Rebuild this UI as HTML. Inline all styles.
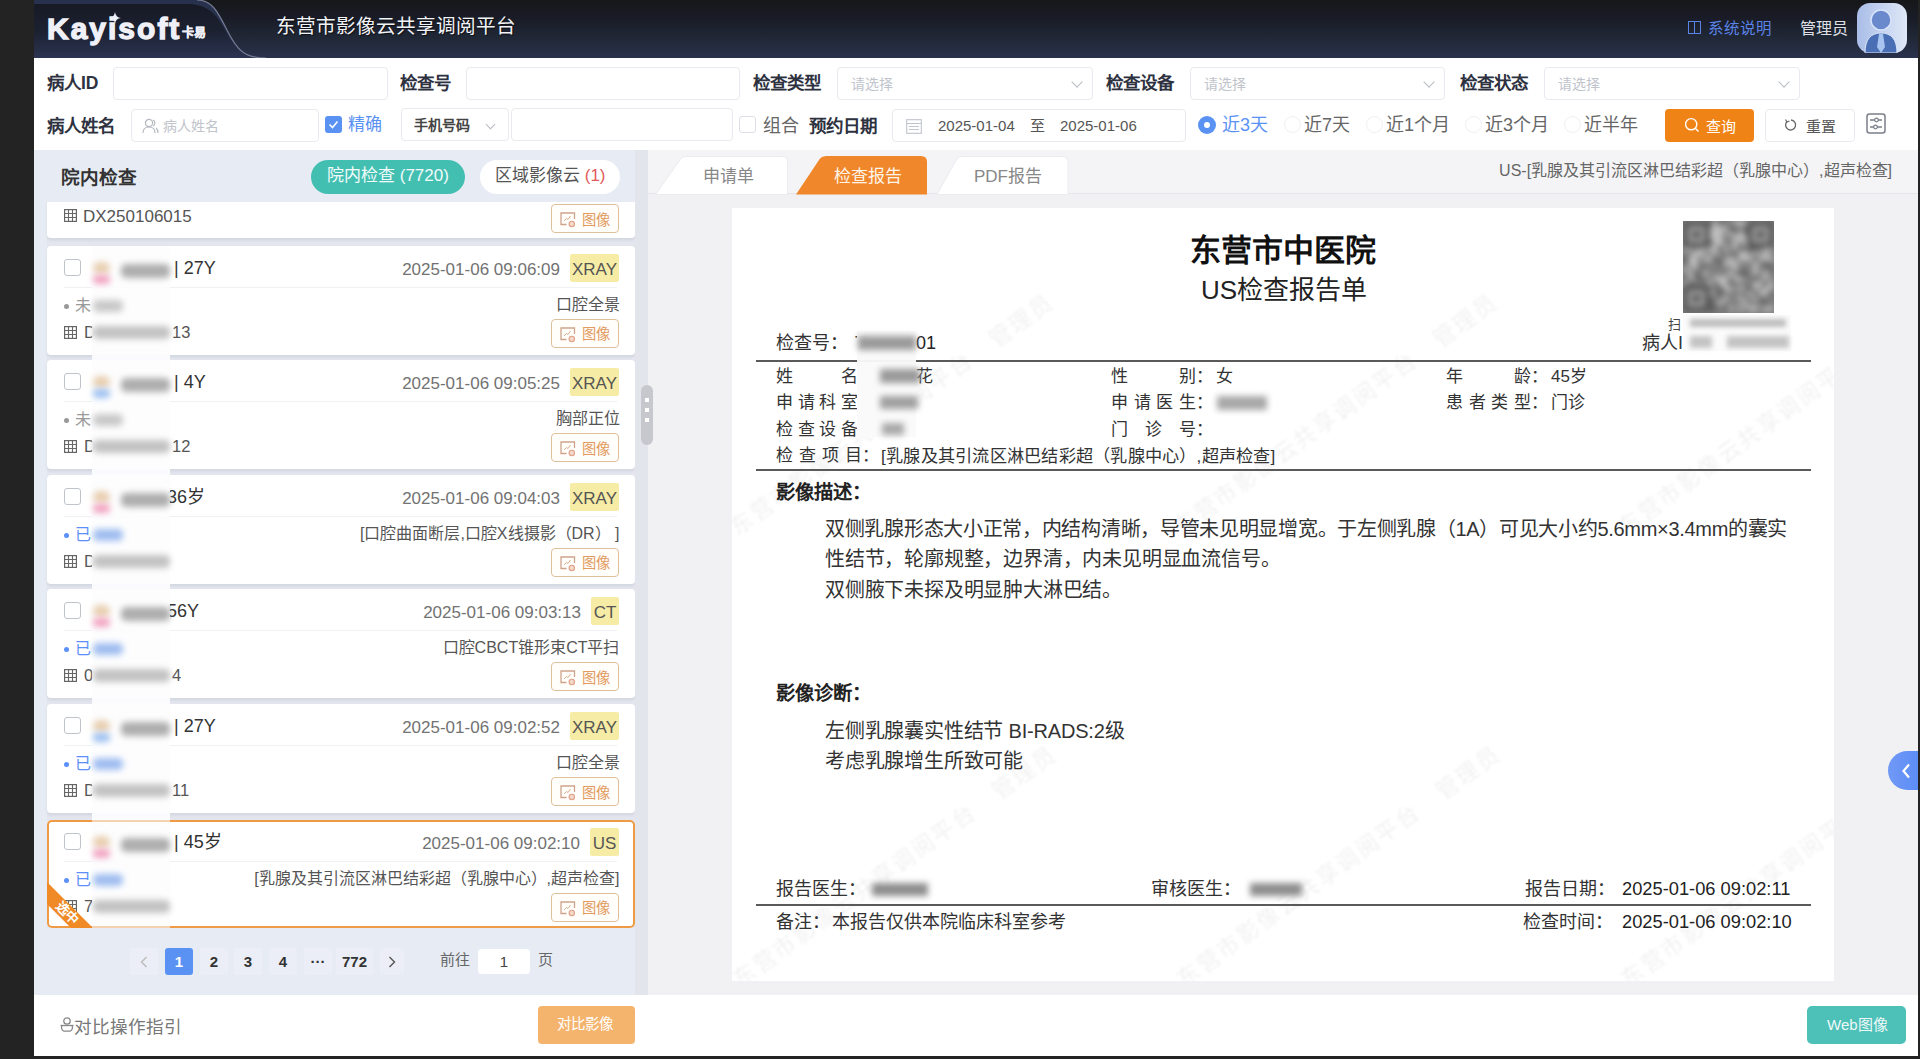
<!DOCTYPE html>
<html lang="zh-CN"><head><meta charset="utf-8">
<style>
*{box-sizing:border-box;margin:0;padding:0}
html,body{width:1920px;height:1059px;overflow:hidden;background:#232323;font-family:"Liberation Sans",sans-serif;color:#333}
.a{position:absolute;white-space:nowrap}
#hdr{position:absolute;left:34px;top:0;width:1884px;height:58px;background:linear-gradient(180deg,#161719 0%,#191c26 30%,#202736 65%,#29324c 100%);overflow:hidden}
#flt{position:absolute;left:34px;top:58px;width:1884px;height:92px;background:#fff}
.lbl{position:absolute;font-size:17.5px;font-weight:bold;color:#2e3140;white-space:nowrap;line-height:20px}
.inp{position:absolute;border:1px solid #e8eaef;border-radius:4px;background:#fff;height:33px}
.ph{position:absolute;font-size:14px;color:#c0c4cc;white-space:nowrap;line-height:16px}
.arr{position:absolute;width:8px;height:8px;border-right:1.3px solid #b8bcc4;border-bottom:1.3px solid #b8bcc4;transform:rotate(45deg)}
.rad{position:absolute;width:17px;height:17px;border-radius:50%;border:1px solid #eff0f3;background:#fff}
.rtx{position:absolute;font-size:18px;color:#666;white-space:nowrap;line-height:20px;margin-top:1.5px}
#lp{position:absolute;left:34px;top:150px;width:614px;height:845px;background:#e7ecf4;overflow:hidden}
#rp{position:absolute;left:648px;top:150px;width:1270px;height:845px;background:#f1f1f3;overflow:hidden}
#ftr{position:absolute;left:34px;top:995px;width:1884px;height:61px;background:#fff}
.card{position:absolute;left:13px;width:588px;background:#fff;border-radius:4px;box-shadow:0 2px 3px rgba(60,70,90,.10)}
.card.sel{box-shadow:inset 0 0 0 2px #ef9a45;border-radius:5px;overflow:hidden}
.ibtn{position:absolute;width:68px;height:29px;border:1.3px solid #dfc09c;border-radius:4px;background:#fffefb}
.tag{height:28px;background:#f6eca6;color:#555;font-size:17px;line-height:31px;text-align:center;border-radius:2px}
.blr{filter:blur(3px)}
.pg{top:798px;height:27px;border-radius:3px;font-size:15px;font-weight:bold;text-align:center;line-height:27px}
</style></head><body>

<!-- HEADER -->
<div id="hdr">
  <svg class="a" style="left:0;top:0" width="260" height="58" viewBox="0 0 260 58">
    <defs><linearGradient id="lg" x1="0" y1="0" x2="0" y2="1"><stop offset="0" stop-color="#171a25"/><stop offset="0.5" stop-color="#1c2131"/><stop offset="1" stop-color="#2b3451"/></linearGradient></defs>
    <path d="M0 0 L163 0 C178 0 184 12 193 30 C203 50 210 58 232 58 L0 58 Z" fill="#27304c"/><path d="M0 4 L152 4 C170 4 180 10 190 28 C201 49 208 57 226 58 L0 58 Z" fill="url(#lg)"/>
    <path d="M163 0 C178 0 184 12 193 30 C203 50 210 58 232 58" fill="none" stroke="#8a90a8" stroke-width="1.2" opacity="0.8"/>
  </svg>
  <div class="a" style="left:13px;top:12px;font-size:30px;font-weight:bold;color:#f0f1f8;letter-spacing:2px;line-height:34px;-webkit-text-stroke:1.3px #f0f1f8">Kayisoft</div>
  <svg class="a" style="left:75px;top:12px" width="12" height="12" viewBox="0 0 12 12"><path d="M6 0 Q6.6 5.4 12 6 Q6.6 6.6 6 12 Q5.4 6.6 0 6 Q5.4 5.4 6 0Z" fill="#f0f1f8"/></svg>
  <div class="a" style="left:148px;top:26px;font-size:12px;font-weight:bold;color:#f0f1f8;line-height:14px;-webkit-text-stroke:0.4px #f0f1f8">卡易</div>
  <div class="a" style="left:242px;top:15px;font-size:19.6px;color:#f2f3f7;line-height:22px;text-shadow:1px 1px 1px rgba(0,0,0,.6)">东营市影像云共享调阅平台</div>
  <div class="a" style="left:1654px;top:21px;width:13px;height:13px;border:1.3px solid #5b84e8"></div>
  <div class="a" style="left:1660px;top:21px;width:1px;height:13px;background:#5b84e8"></div>
  <div class="a" style="left:1674px;top:18.5px;font-size:15.5px;color:#5b84e8;line-height:20px">系统说明</div>
  <div class="a" style="left:1766px;top:18.5px;font-size:16px;color:#dfe0e6;line-height:20px">管理员</div>
  <svg class="a" style="left:1823px;top:3px" width="50" height="50" viewBox="0 0 50 50">
    <defs><linearGradient id="av" x1="0" y1="0" x2="1" y2="0"><stop offset="0" stop-color="#a9bde8"/><stop offset="1" stop-color="#dfe8f7"/></linearGradient></defs>
    <rect x="0" y="0" width="50" height="50" rx="13" fill="url(#av)"/>
    <circle cx="24" cy="17" r="10" fill="#6a88cc" stroke="#d8e4f8" stroke-width="1.5"/>
    <path d="M8 50 C8 36 14 30 24 30 C34 30 40 36 40 50 Z" fill="#4a6fb5" stroke="#d8e4f8" stroke-width="1"/>
    <path d="M22 31 L26 31 L28 44 L24 50 L20 44 Z" fill="#a8c4f0"/>
  </svg>
</div>

<!-- FILTER -->
<div id="flt">
  <div class="lbl" style="left:13px;top:15px">病人ID</div>
  <div class="inp" style="left:79px;top:9px;width:275px"></div>
  <div class="lbl" style="left:366px;top:15px">检查号</div>
  <div class="inp" style="left:432px;top:9px;width:274px"></div>
  <div class="lbl" style="left:719px;top:15px">检查类型</div>
  <div class="inp" style="left:803px;top:9px;width:256px"><div class="ph" style="left:13px;top:8px">请选择</div><div class="arr" style="left:235px;top:10px"></div></div>
  <div class="lbl" style="left:1072px;top:15px">检查设备</div>
  <div class="inp" style="left:1156px;top:9px;width:255px"><div class="ph" style="left:13px;top:8px">请选择</div><div class="arr" style="left:234px;top:10px"></div></div>
  <div class="lbl" style="left:1426px;top:15px">检查状态</div>
  <div class="inp" style="left:1510px;top:9px;width:256px"><div class="ph" style="left:13px;top:8px">请选择</div><div class="arr" style="left:235px;top:10px"></div></div>

  <div class="lbl" style="left:13px;top:57.5px">病人姓名</div>
  <div class="inp" style="left:97px;top:51px;width:188px">
    <svg class="a" style="left:10px;top:8px" width="17" height="16" viewBox="0 0 17 16"><circle cx="7" cy="5" r="3.6" fill="none" stroke="#b4b8c0" stroke-width="1.2"/><path d="M1 15 C1 10.5 3.5 9 7 9 C10.5 9 13 10.5 13 15" fill="none" stroke="#b4b8c0" stroke-width="1.2"/><path d="M11 2 C13.5 3 13.5 7 11 8 M14 10 C15.5 11 16 13 16 15" fill="none" stroke="#b4b8c0" stroke-width="1.2"/></svg>
    <div class="ph" style="left:31px;top:8px">病人姓名</div>
  </div>
  <div class="a" style="left:291px;top:58px;width:17px;height:17px;border-radius:3px;background:#5a92f4"></div>
  <svg class="a" style="left:291px;top:58px" width="17" height="17" viewBox="0 0 17 17"><path d="M4.5 8.5 L7.5 11.5 L12.5 5.5" fill="none" stroke="#fff" stroke-width="1.6"/></svg>
  <div class="a" style="left:314px;top:57px;font-size:17px;color:#5a92f4;line-height:20px">精确</div>
  <div class="inp" style="left:367px;top:50px;width:108px;height:33px"><div class="a" style="left:12px;top:8px;font-size:14px;font-weight:bold;color:#444;line-height:16px">手机号码</div><div class="arr" style="left:85px;top:12px;width:7px;height:7px"></div></div>
  <div class="inp" style="left:477px;top:50px;width:222px;height:33px"></div>
  <div class="a" style="left:705px;top:58px;width:17px;height:17px;border-radius:3px;border:1px solid #dcdfe6;background:#fff"></div>
  <div class="a" style="left:729px;top:57.5px;font-size:18px;color:#666;line-height:20px">组合</div>
  <div class="lbl" style="left:775px;top:57.5px">预约日期</div>
  <div class="inp" style="left:858px;top:51px;width:294px;height:33px">
    <svg class="a" style="left:13px;top:8px" width="16" height="16" viewBox="0 0 16 16"><rect x="0.7" y="1.7" width="14.6" height="13.6" fill="none" stroke="#c0c4cc" stroke-width="1.1"/><path d="M0.7 5.5 H15.3 M3 8.5 H13 M3 11.5 H13" stroke="#c0c4cc" stroke-width="1"/></svg>
    <div class="a" style="left:45px;top:7px;font-size:15px;color:#555;line-height:18px">2025-01-04</div>
    <div class="a" style="left:137px;top:7px;font-size:15px;color:#555;line-height:18px">至</div>
    <div class="a" style="left:167px;top:7px;font-size:15px;color:#555;line-height:18px">2025-01-06</div>
  </div>
  <div class="a" style="left:1164px;top:58px;width:18px;height:18px;border-radius:50%;background:#5a92f4"></div>
  <div class="a" style="left:1170px;top:64px;width:6px;height:6px;border-radius:50%;background:#fff"></div>
  <div class="a" style="left:1188px;top:56.5px;font-size:18px;color:#5a92f4;line-height:20px">近3天</div>
  <div class="rad" style="left:1250px;top:58px"></div>
  <div class="rtx" style="left:1270px;top:55px">近7天</div>
  <div class="rad" style="left:1332px;top:58px"></div>
  <div class="rtx" style="left:1352px;top:55px">近1个月</div>
  <div class="rad" style="left:1431px;top:58px"></div>
  <div class="rtx" style="left:1451px;top:55px">近3个月</div>
  <div class="rad" style="left:1530px;top:58px"></div>
  <div class="rtx" style="left:1550px;top:55px">近半年</div>
  <div class="a" style="left:1631px;top:51px;width:89px;height:33px;border-radius:4px;background:#f08316"></div>
  <svg class="a" style="left:1650px;top:59px" width="16" height="16" viewBox="0 0 16 16"><circle cx="7.2" cy="7.2" r="5.6" fill="none" stroke="#fff" stroke-width="1.4"/><path d="M11.3 11.3 L14.5 14.5" stroke="#fff" stroke-width="1.4"/></svg>
  <div class="a" style="left:1672px;top:59.5px;font-size:15px;color:#fff;line-height:18px">查询</div>
  <div class="inp" style="left:1731px;top:51px;width:90px;height:33px"></div>
  <svg class="a" style="left:1750px;top:60px" width="14" height="14" viewBox="0 0 14 14"><path d="M3 3.5 A5 5 0 1 0 7 2" fill="none" stroke="#666" stroke-width="1.3"/><path d="M1.5 1.5 L3 4 L5.5 3" fill="none" stroke="#666" stroke-width="1.2"/></svg>
  <div class="a" style="left:1772px;top:59.5px;font-size:15px;color:#555;line-height:18px">重置</div>
  <svg class="a" style="left:1832px;top:55px" width="20" height="21" viewBox="0 0 20 21"><rect x="1" y="1" width="18" height="19" rx="2.5" fill="none" stroke="#7a7f88" stroke-width="1.5"/><path d="M4 7 H9 M12 7 H16 M4 14 H8 M11 14 H16" stroke="#7a7f88" stroke-width="1.3"/><circle cx="10.5" cy="7" r="1.8" fill="none" stroke="#7a7f88" stroke-width="1.2"/><circle cx="9.5" cy="14" r="1.8" fill="none" stroke="#7a7f88" stroke-width="1.2"/></svg>
</div>

<!-- LEFT PANEL -->
<!--LP--><div id="lp">
<div class="a" style="left:27px;top:17.5px;font-size:18.6px;font-weight:bold;color:#333;line-height:20px">院内检查</div>
<div class="a" style="left:277px;top:10px;width:154px;height:34px;border-radius:17px;background:#43bfb2"></div>
<div class="a" style="left:293px;top:16px;font-size:17px;color:#f2fbfa;line-height:20px">院内检查 (7720)</div>
<div class="a" style="left:446px;top:10px;width:140px;height:34px;border-radius:17px;background:#fff"></div>
<div class="a" style="left:461px;top:16px;font-size:17px;color:#555;line-height:20px">区域影像云 <span style="color:#e25a5a">(1)</span></div>
<div class="a" style="left:0;top:52px;width:614px;height:726px;overflow:hidden"><div class="a" style="left:13px;top:0;width:588px;height:726px;background:#e3e6ee"></div>
<div class="card" style="top:-73px;height:109px"><svg class="a" style="left:17px;top:80px" width="13" height="13" viewBox="0 0 13 13"><rect x="0.6" y="0.6" width="11.8" height="11.8" fill="none" stroke="#666" stroke-width="1.2"/><path d="M4.5 0.6 V12.4 M8.5 0.6 V12.4 M0.6 4.5 H12.4 M0.6 8.5 H12.4" stroke="#666" stroke-width="1.1"/></svg><div class="a" style="left:36px;top:77.5px;font-size:17px;color:#555;line-height:20px">DX250106015</div><div class="ibtn" style="left:504px;top:75px"><svg class="a" style="left:8px;top:7px" width="17" height="16" viewBox="0 0 17 16"><path d="M6.5 12.5 H1 V1 H14.5 V7" fill="none" stroke="#cfa48c" stroke-width="1.3"/><path d="M4 9 L6.5 6.5 L8 7.5 L10.5 4" fill="none" stroke="#d9b090" stroke-width="1"/><circle cx="11.8" cy="12" r="2.7" fill="#f4d8c8" stroke="#dfa088" stroke-width="1.1"/></svg><div class="a" style="left:30px;top:6.5px;font-size:14.3px;color:#e29a5e;line-height:17px">图像</div></div></div>
<div class="card" style="top:43.5px;height:109.0px"><div class="a" style="left:17px;top:13px;width:17px;height:17px;border:1.3px solid #bfc3ca;border-radius:3px;background:#fff"></div><div class="a" style="left:127px;top:12px;font-size:18px;color:#333;line-height:20px">| 27Y</div><div class="a" style="right:75px;top:14px;font-size:17px;color:#727272;line-height:20px">2025-01-06 09:06:09</div><div class="a tag" style="left:523px;top:8px;width:49px">XRAY</div><div class="a" style="left:17px;top:41px;width:553px;height:1px;background:#f0f1f4"></div><div class="a" style="left:17px;top:58px;width:5px;height:5px;border-radius:50%;background:#999"></div><div class="a" style="left:28px;top:50px;font-size:16px;color:#999;line-height:20px">未</div><div class="a" style="right:15.5px;top:49px;font-size:16px;color:#555;line-height:20px">口腔全景</div><svg class="a" style="left:17px;top:80px" width="13" height="13" viewBox="0 0 13 13"><rect x="0.6" y="0.6" width="11.8" height="11.8" fill="none" stroke="#666" stroke-width="1.2"/><path d="M4.5 0.6 V12.4 M8.5 0.6 V12.4 M0.6 4.5 H12.4 M0.6 8.5 H12.4" stroke="#666" stroke-width="1.1"/></svg><div class="a" style="left:37px;top:76px;font-size:16.5px;color:#555;line-height:20px">D</div><div class="a" style="left:125px;top:76px;font-size:16.5px;color:#555;line-height:20px">13</div><div class="ibtn" style="left:504px;top:73px"><svg class="a" style="left:8px;top:7px" width="17" height="16" viewBox="0 0 17 16"><path d="M6.5 12.5 H1 V1 H14.5 V7" fill="none" stroke="#cfa48c" stroke-width="1.3"/><path d="M4 9 L6.5 6.5 L8 7.5 L10.5 4" fill="none" stroke="#d9b090" stroke-width="1"/><circle cx="11.8" cy="12" r="2.7" fill="#f4d8c8" stroke="#dfa088" stroke-width="1.1"/></svg><div class="a" style="left:30px;top:6.5px;font-size:14.3px;color:#e29a5e;line-height:17px">图像</div></div></div>
<div class="card" style="top:158.0px;height:109.0px"><div class="a" style="left:17px;top:13px;width:17px;height:17px;border:1.3px solid #bfc3ca;border-radius:3px;background:#fff"></div><div class="a" style="left:127px;top:12px;font-size:18px;color:#333;line-height:20px">| 4Y</div><div class="a" style="right:75px;top:14px;font-size:17px;color:#727272;line-height:20px">2025-01-06 09:05:25</div><div class="a tag" style="left:523px;top:8px;width:49px">XRAY</div><div class="a" style="left:17px;top:41px;width:553px;height:1px;background:#f0f1f4"></div><div class="a" style="left:17px;top:58px;width:5px;height:5px;border-radius:50%;background:#999"></div><div class="a" style="left:28px;top:50px;font-size:16px;color:#999;line-height:20px">未</div><div class="a" style="right:15.5px;top:49px;font-size:16px;color:#555;line-height:20px">胸部正位</div><svg class="a" style="left:17px;top:80px" width="13" height="13" viewBox="0 0 13 13"><rect x="0.6" y="0.6" width="11.8" height="11.8" fill="none" stroke="#666" stroke-width="1.2"/><path d="M4.5 0.6 V12.4 M8.5 0.6 V12.4 M0.6 4.5 H12.4 M0.6 8.5 H12.4" stroke="#666" stroke-width="1.1"/></svg><div class="a" style="left:37px;top:76px;font-size:16.5px;color:#555;line-height:20px">D</div><div class="a" style="left:125px;top:76px;font-size:16.5px;color:#555;line-height:20px">12</div><div class="ibtn" style="left:504px;top:73px"><svg class="a" style="left:8px;top:7px" width="17" height="16" viewBox="0 0 17 16"><path d="M6.5 12.5 H1 V1 H14.5 V7" fill="none" stroke="#cfa48c" stroke-width="1.3"/><path d="M4 9 L6.5 6.5 L8 7.5 L10.5 4" fill="none" stroke="#d9b090" stroke-width="1"/><circle cx="11.8" cy="12" r="2.7" fill="#f4d8c8" stroke="#dfa088" stroke-width="1.1"/></svg><div class="a" style="left:30px;top:6.5px;font-size:14.3px;color:#e29a5e;line-height:17px">图像</div></div></div>
<div class="card" style="top:272.5px;height:109.0px"><div class="a" style="left:17px;top:13px;width:17px;height:17px;border:1.3px solid #bfc3ca;border-radius:3px;background:#fff"></div><div class="a" style="left:120px;top:12px;font-size:18px;color:#333;line-height:20px">36岁</div><div class="a" style="right:75px;top:14px;font-size:17px;color:#727272;line-height:20px">2025-01-06 09:04:03</div><div class="a tag" style="left:523px;top:8px;width:49px">XRAY</div><div class="a" style="left:17px;top:41px;width:553px;height:1px;background:#f0f1f4"></div><div class="a" style="left:17px;top:58px;width:5px;height:5px;border-radius:50%;background:#5b8ff9"></div><div class="a" style="left:28px;top:50px;font-size:16px;color:#5b8ff9;line-height:20px">已</div><div class="a" style="right:15.5px;top:49px;font-size:16px;color:#555;line-height:20px">[口腔曲面断层,口腔X线摄影（DR） ]</div><svg class="a" style="left:17px;top:80px" width="13" height="13" viewBox="0 0 13 13"><rect x="0.6" y="0.6" width="11.8" height="11.8" fill="none" stroke="#666" stroke-width="1.2"/><path d="M4.5 0.6 V12.4 M8.5 0.6 V12.4 M0.6 4.5 H12.4 M0.6 8.5 H12.4" stroke="#666" stroke-width="1.1"/></svg><div class="a" style="left:37px;top:76px;font-size:16.5px;color:#555;line-height:20px">D</div><div class="ibtn" style="left:504px;top:73px"><svg class="a" style="left:8px;top:7px" width="17" height="16" viewBox="0 0 17 16"><path d="M6.5 12.5 H1 V1 H14.5 V7" fill="none" stroke="#cfa48c" stroke-width="1.3"/><path d="M4 9 L6.5 6.5 L8 7.5 L10.5 4" fill="none" stroke="#d9b090" stroke-width="1"/><circle cx="11.8" cy="12" r="2.7" fill="#f4d8c8" stroke="#dfa088" stroke-width="1.1"/></svg><div class="a" style="left:30px;top:6.5px;font-size:14.3px;color:#e29a5e;line-height:17px">图像</div></div></div>
<div class="card" style="top:387.0px;height:109.0px"><div class="a" style="left:17px;top:13px;width:17px;height:17px;border:1.3px solid #bfc3ca;border-radius:3px;background:#fff"></div><div class="a" style="left:120px;top:12px;font-size:18px;color:#333;line-height:20px">56Y</div><div class="a" style="right:54px;top:14px;font-size:17px;color:#727272;line-height:20px">2025-01-06 09:03:13</div><div class="a tag" style="left:544px;top:8px;width:28px">CT</div><div class="a" style="left:17px;top:41px;width:553px;height:1px;background:#f0f1f4"></div><div class="a" style="left:17px;top:58px;width:5px;height:5px;border-radius:50%;background:#5b8ff9"></div><div class="a" style="left:28px;top:50px;font-size:16px;color:#5b8ff9;line-height:20px">已</div><div class="a" style="right:15.5px;top:49px;font-size:16px;color:#555;line-height:20px">口腔CBCT锥形束CT平扫</div><svg class="a" style="left:17px;top:80px" width="13" height="13" viewBox="0 0 13 13"><rect x="0.6" y="0.6" width="11.8" height="11.8" fill="none" stroke="#666" stroke-width="1.2"/><path d="M4.5 0.6 V12.4 M8.5 0.6 V12.4 M0.6 4.5 H12.4 M0.6 8.5 H12.4" stroke="#666" stroke-width="1.1"/></svg><div class="a" style="left:37px;top:76px;font-size:16.5px;color:#555;line-height:20px">0</div><div class="a" style="left:125px;top:76px;font-size:16.5px;color:#555;line-height:20px">4</div><div class="ibtn" style="left:504px;top:73px"><svg class="a" style="left:8px;top:7px" width="17" height="16" viewBox="0 0 17 16"><path d="M6.5 12.5 H1 V1 H14.5 V7" fill="none" stroke="#cfa48c" stroke-width="1.3"/><path d="M4 9 L6.5 6.5 L8 7.5 L10.5 4" fill="none" stroke="#d9b090" stroke-width="1"/><circle cx="11.8" cy="12" r="2.7" fill="#f4d8c8" stroke="#dfa088" stroke-width="1.1"/></svg><div class="a" style="left:30px;top:6.5px;font-size:14.3px;color:#e29a5e;line-height:17px">图像</div></div></div>
<div class="card" style="top:502.0px;height:109.0px"><div class="a" style="left:17px;top:13px;width:17px;height:17px;border:1.3px solid #bfc3ca;border-radius:3px;background:#fff"></div><div class="a" style="left:127px;top:12px;font-size:18px;color:#333;line-height:20px">| 27Y</div><div class="a" style="right:75px;top:14px;font-size:17px;color:#727272;line-height:20px">2025-01-06 09:02:52</div><div class="a tag" style="left:523px;top:8px;width:49px">XRAY</div><div class="a" style="left:17px;top:41px;width:553px;height:1px;background:#f0f1f4"></div><div class="a" style="left:17px;top:58px;width:5px;height:5px;border-radius:50%;background:#5b8ff9"></div><div class="a" style="left:28px;top:50px;font-size:16px;color:#5b8ff9;line-height:20px">已</div><div class="a" style="right:15.5px;top:49px;font-size:16px;color:#555;line-height:20px">口腔全景</div><svg class="a" style="left:17px;top:80px" width="13" height="13" viewBox="0 0 13 13"><rect x="0.6" y="0.6" width="11.8" height="11.8" fill="none" stroke="#666" stroke-width="1.2"/><path d="M4.5 0.6 V12.4 M8.5 0.6 V12.4 M0.6 4.5 H12.4 M0.6 8.5 H12.4" stroke="#666" stroke-width="1.1"/></svg><div class="a" style="left:37px;top:76px;font-size:16.5px;color:#555;line-height:20px">D</div><div class="a" style="left:125px;top:76px;font-size:16.5px;color:#555;line-height:20px">11</div><div class="ibtn" style="left:504px;top:73px"><svg class="a" style="left:8px;top:7px" width="17" height="16" viewBox="0 0 17 16"><path d="M6.5 12.5 H1 V1 H14.5 V7" fill="none" stroke="#cfa48c" stroke-width="1.3"/><path d="M4 9 L6.5 6.5 L8 7.5 L10.5 4" fill="none" stroke="#d9b090" stroke-width="1"/><circle cx="11.8" cy="12" r="2.7" fill="#f4d8c8" stroke="#dfa088" stroke-width="1.1"/></svg><div class="a" style="left:30px;top:6.5px;font-size:14.3px;color:#e29a5e;line-height:17px">图像</div></div></div>
<div class="card sel" style="top:617.5px;height:108.0px"><div class="a" style="left:17px;top:13px;width:17px;height:17px;border:1.3px solid #bfc3ca;border-radius:3px;background:#fff"></div><div class="a" style="left:127px;top:12px;font-size:18px;color:#333;line-height:20px">| 45岁</div><div class="a" style="right:55px;top:14px;font-size:17px;color:#727272;line-height:20px">2025-01-06 09:02:10</div><div class="a tag" style="left:543px;top:8px;width:29px">US</div><div class="a" style="left:17px;top:41px;width:553px;height:1px;background:#f0f1f4"></div><div class="a" style="left:17px;top:58px;width:5px;height:5px;border-radius:50%;background:#5b8ff9"></div><div class="a" style="left:28px;top:50px;font-size:16px;color:#5b8ff9;line-height:20px">已</div><div class="a" style="right:15.5px;top:49px;font-size:16px;color:#555;line-height:20px">[乳腺及其引流区淋巴结彩超（乳腺中心）,超声检查]</div><svg class="a" style="left:17px;top:80px" width="13" height="13" viewBox="0 0 13 13"><rect x="0.6" y="0.6" width="11.8" height="11.8" fill="none" stroke="#666" stroke-width="1.2"/><path d="M4.5 0.6 V12.4 M8.5 0.6 V12.4 M0.6 4.5 H12.4 M0.6 8.5 H12.4" stroke="#666" stroke-width="1.1"/></svg><div class="a" style="left:37px;top:76px;font-size:16.5px;color:#555;line-height:20px">7</div><div class="ibtn" style="left:504px;top:73px"><svg class="a" style="left:8px;top:7px" width="17" height="16" viewBox="0 0 17 16"><path d="M6.5 12.5 H1 V1 H14.5 V7" fill="none" stroke="#cfa48c" stroke-width="1.3"/><path d="M4 9 L6.5 6.5 L8 7.5 L10.5 4" fill="none" stroke="#d9b090" stroke-width="1"/><circle cx="11.8" cy="12" r="2.7" fill="#f4d8c8" stroke="#dfa088" stroke-width="1.1"/></svg><div class="a" style="left:30px;top:6.5px;font-size:14.3px;color:#e29a5e;line-height:17px">图像</div></div><svg class="a" style="left:0;top:58px" width="50" height="50" viewBox="0 0 50 50"><path d="M0 4 L46 50 L24 50 L0 26 Z" fill="#ef8a26"/><text x="0" y="0" transform="translate(8,29) rotate(45)" font-size="13" font-weight="bold" fill="#fff" font-family="Liberation Sans,sans-serif">选中</text></svg></div>
<div class="a" style="left:58px;top:43.5px;width:78px;height:682px;background:rgba(253,253,254,0.93)"><div class="a blr" style="left:1px;top:16.0px;width:17px;height:12px;border-radius:6px;background:#e8cfb0"></div><div class="a blr" style="left:1px;top:29.0px;width:17px;height:9px;border-radius:4px;background:#f2a3c0"></div><div class="a blr" style="left:29px;top:18.0px;width:49px;height:14px;border-radius:5px;background:#9a9a9a;opacity:.8"></div><div class="a blr" style="left:1px;top:54.0px;width:30px;height:12px;border-radius:5px;background:#c8c8c8"></div><div class="a blr" style="left:1px;top:80.0px;width:77px;height:13px;border-radius:5px;background:#b4b4b4;opacity:.8"></div><div class="a blr" style="left:1px;top:130.5px;width:17px;height:12px;border-radius:6px;background:#e8cfb0"></div><div class="a blr" style="left:1px;top:143.5px;width:17px;height:9px;border-radius:4px;background:#9cc0f0"></div><div class="a blr" style="left:29px;top:132.5px;width:49px;height:14px;border-radius:5px;background:#9a9a9a;opacity:.8"></div><div class="a blr" style="left:1px;top:168.5px;width:30px;height:12px;border-radius:5px;background:#c8c8c8"></div><div class="a blr" style="left:1px;top:194.5px;width:77px;height:13px;border-radius:5px;background:#b4b4b4;opacity:.8"></div><div class="a blr" style="left:1px;top:245.0px;width:17px;height:12px;border-radius:6px;background:#e8cfb0"></div><div class="a blr" style="left:1px;top:258.0px;width:17px;height:9px;border-radius:4px;background:#f2a3c0"></div><div class="a blr" style="left:29px;top:247.0px;width:49px;height:14px;border-radius:5px;background:#9a9a9a;opacity:.8"></div><div class="a blr" style="left:1px;top:283.0px;width:30px;height:12px;border-radius:5px;background:#9fbdf0"></div><div class="a blr" style="left:1px;top:309.0px;width:77px;height:13px;border-radius:5px;background:#b4b4b4;opacity:.8"></div><div class="a blr" style="left:1px;top:359.5px;width:17px;height:12px;border-radius:6px;background:#e8cfb0"></div><div class="a blr" style="left:1px;top:372.5px;width:17px;height:9px;border-radius:4px;background:#f2a3c0"></div><div class="a blr" style="left:29px;top:361.5px;width:49px;height:14px;border-radius:5px;background:#9a9a9a;opacity:.8"></div><div class="a blr" style="left:1px;top:397.5px;width:30px;height:12px;border-radius:5px;background:#9fbdf0"></div><div class="a blr" style="left:1px;top:423.5px;width:77px;height:13px;border-radius:5px;background:#b4b4b4;opacity:.8"></div><div class="a blr" style="left:1px;top:474.5px;width:17px;height:12px;border-radius:6px;background:#e8cfb0"></div><div class="a blr" style="left:1px;top:487.5px;width:17px;height:9px;border-radius:4px;background:#9cc0f0"></div><div class="a blr" style="left:29px;top:476.5px;width:49px;height:14px;border-radius:5px;background:#9a9a9a;opacity:.8"></div><div class="a blr" style="left:1px;top:512.5px;width:30px;height:12px;border-radius:5px;background:#9fbdf0"></div><div class="a blr" style="left:1px;top:538.5px;width:77px;height:13px;border-radius:5px;background:#b4b4b4;opacity:.8"></div><div class="a blr" style="left:1px;top:590.0px;width:17px;height:12px;border-radius:6px;background:#e8cfb0"></div><div class="a blr" style="left:1px;top:603.0px;width:17px;height:9px;border-radius:4px;background:#f2a3c0"></div><div class="a blr" style="left:29px;top:592.0px;width:49px;height:14px;border-radius:5px;background:#9a9a9a;opacity:.8"></div><div class="a blr" style="left:1px;top:628.0px;width:30px;height:12px;border-radius:5px;background:#9fbdf0"></div><div class="a blr" style="left:1px;top:654.0px;width:77px;height:13px;border-radius:5px;background:#b4b4b4;opacity:.8"></div><div class="a" style="left:0;top:574px;width:78px;height:2px;background:#f4d2b0"></div><div class="a" style="left:0;top:680px;width:78px;height:2px;background:#f4d2b0"></div></div>
</div>
<div class="a" style="left:601px;top:0;width:13px;height:845px;background:#e2e5eb"></div>
<div class="a pg" style="left:96px;width:28px;background:#ebeef6;color:#333"><svg style="position:absolute;left:10px;top:8px" width="8" height="12" viewBox="0 0 8 12"><path d="M6.5 1 L1.5 6 L6.5 11" fill="none" stroke="#bbb" stroke-width="1.4"/></svg></div>
<div class="a pg" style="left:131px;width:28px;background:#5a92f4;color:#fff">1</div>
<div class="a pg" style="left:166px;width:28px;background:#ebeef6;color:#333">2</div>
<div class="a pg" style="left:200px;width:28px;background:#ebeef6;color:#333">3</div>
<div class="a pg" style="left:235px;width:28px;background:#ebeef6;color:#333">4</div>
<div class="a pg" style="left:270px;width:28px;background:#ebeef6;color:#333">&middot;&middot;&middot;</div>
<div class="a pg" style="left:302px;width:37px;background:#ebeef6;color:#333">772</div>
<div class="a pg" style="left:346px;width:24px;background:#ebeef6;color:#333"><svg style="position:absolute;left:8px;top:8px" width="8" height="12" viewBox="0 0 8 12"><path d="M1.5 1 L6.5 6 L1.5 11" fill="none" stroke="#555" stroke-width="1.4"/></svg></div>
<div class="a" style="left:406px;top:801px;font-size:15px;color:#666;line-height:18px">前往</div>
<div class="a" style="left:444px;top:799px;width:52px;height:25px;border-radius:4px;background:#fff;font-size:15px;color:#444;text-align:center;line-height:25px">1</div>
<div class="a" style="left:504px;top:801px;font-size:15px;color:#666;line-height:18px">页</div>
</div><div class="a" style="left:640.5px;top:385px;width:12px;height:60px;border-radius:6px;background:#c6c8cd;z-index:5"></div><div class="a" style="left:645px;top:398px;width:4px;height:4px;background:#fff;z-index:6"></div><div class="a" style="left:645px;top:408px;width:4px;height:4px;background:#fff;z-index:6"></div><div class="a" style="left:645px;top:418px;width:4px;height:4px;background:#fff;z-index:6"></div><!--/LP-->

<!-- RIGHT PANEL -->
<!--RP--><div id="rp">
<div class="a" style="left:0;top:0;width:1270px;height:44px;background:#f4f4f6;border-bottom:1px solid #e6e6ea"></div>
<svg class="a" style="left:0;top:0" width="440" height="46" viewBox="0 0 440 46">
<path d="M7.6 44.5 L33 8.5 Q35 6.5 38 6.5 L134 6.5 Q139.5 6.5 139.5 12 L139.5 44.5 Z" fill="#fff" stroke="#ececf0" stroke-width="1"/>
<path d="M148 44.5 L172 8.5 Q174 6 178 6 L273 6 Q279 6 279 12 L279 44.5 Z" fill="#f0872a"/>
<path d="M289 44.5 L309 8.5 Q311 6.5 314 6.5 L414 6.5 Q420 6.5 420 12 L420 44.5 Z" fill="#fff" stroke="#ececf0" stroke-width="1"/>
</svg>
<div class="a" style="left:55.0px;top:17.0px;font-size:17px;color:#888;line-height:20px">申请单</div>
<div class="a" style="left:186.0px;top:17.0px;font-size:17px;color:#fff5ea;line-height:20px">检查报告</div>
<div class="a" style="left:326.0px;top:17.0px;font-size:17px;color:#888;line-height:20px">PDF报告</div>
<div class="a" style="right:26px;top:11px;font-size:16px;color:#666;line-height:20px">US-[乳腺及其引流区淋巴结彩超（乳腺中心）,超声检查]</div>
<div class="a" style="left:84px;top:58px;width:1102px;height:773px;background:#fff;overflow:hidden"><div class="a" style="left:8px;top:308px;font-size:22px;letter-spacing:2.5px;line-height:24px;color:rgba(60,60,70,0.07);transform:rotate(-36deg);transform-origin:0 100%;filter:blur(0.9px)">东营市影像云共享调阅平台&nbsp;&nbsp;&nbsp;管理员</div>
<div class="a" style="left:452px;top:308px;font-size:22px;letter-spacing:2.5px;line-height:24px;color:rgba(60,60,70,0.07);transform:rotate(-36deg);transform-origin:0 100%;filter:blur(0.9px)">东营市影像云共享调阅平台&nbsp;&nbsp;&nbsp;管理员</div>
<div class="a" style="left:896px;top:308px;font-size:22px;letter-spacing:2.5px;line-height:24px;color:rgba(60,60,70,0.07);transform:rotate(-36deg);transform-origin:0 100%;filter:blur(0.9px)">东营市影像云共享调阅平台&nbsp;&nbsp;&nbsp;管理员</div>
<div class="a" style="left:11px;top:760px;font-size:22px;letter-spacing:2.5px;line-height:24px;color:rgba(60,60,70,0.07);transform:rotate(-36deg);transform-origin:0 100%;filter:blur(0.9px)">东营市影像云共享调阅平台&nbsp;&nbsp;&nbsp;管理员</div>
<div class="a" style="left:455px;top:760px;font-size:22px;letter-spacing:2.5px;line-height:24px;color:rgba(60,60,70,0.07);transform:rotate(-36deg);transform-origin:0 100%;filter:blur(0.9px)">东营市影像云共享调阅平台&nbsp;&nbsp;&nbsp;管理员</div>
<div class="a" style="left:899px;top:760px;font-size:22px;letter-spacing:2.5px;line-height:24px;color:rgba(60,60,70,0.07);transform:rotate(-36deg);transform-origin:0 100%;filter:blur(0.9px)">东营市影像云共享调阅平台&nbsp;&nbsp;&nbsp;管理员</div>
<div class="a" style="left:458.0px;top:25.0px;font-size:31px;font-weight:bold;color:#111;line-height:36px">东营市中医院</div>
<div class="a" style="left:469.0px;top:67.0px;font-size:26px;color:#222;line-height:30px">US检查报告单</div>
<div class="a" style="left:951px;top:13px;width:91px;height:92px;overflow:hidden;background:#808080"><div class="a" style="left:0;top:0;width:91px;height:92px;filter:blur(3px)"><div class="a" style="left:0px;top:0px;width:5px;height:5px;background:#5a5a5a"></div><div class="a" style="left:5px;top:0px;width:5px;height:5px;background:#5a5a5a"></div><div class="a" style="left:15px;top:0px;width:5px;height:5px;background:#5a5a5a"></div><div class="a" style="left:20px;top:0px;width:5px;height:5px;background:#5a5a5a"></div><div class="a" style="left:25px;top:0px;width:5px;height:5px;background:#5a5a5a"></div><div class="a" style="left:30px;top:0px;width:5px;height:5px;background:#bdbdbd"></div><div class="a" style="left:35px;top:0px;width:5px;height:5px;background:#5a5a5a"></div><div class="a" style="left:50px;top:0px;width:5px;height:5px;background:#bdbdbd"></div><div class="a" style="left:55px;top:0px;width:5px;height:5px;background:#bdbdbd"></div><div class="a" style="left:60px;top:0px;width:5px;height:5px;background:#bdbdbd"></div><div class="a" style="left:75px;top:0px;width:5px;height:5px;background:#bdbdbd"></div><div class="a" style="left:10px;top:5px;width:5px;height:5px;background:#bdbdbd"></div><div class="a" style="left:15px;top:5px;width:5px;height:5px;background:#bdbdbd"></div><div class="a" style="left:20px;top:5px;width:5px;height:5px;background:#5a5a5a"></div><div class="a" style="left:25px;top:5px;width:5px;height:5px;background:#bdbdbd"></div><div class="a" style="left:30px;top:5px;width:5px;height:5px;background:#bdbdbd"></div><div class="a" style="left:35px;top:5px;width:5px;height:5px;background:#bdbdbd"></div><div class="a" style="left:40px;top:5px;width:5px;height:5px;background:#bdbdbd"></div><div class="a" style="left:45px;top:5px;width:5px;height:5px;background:#5a5a5a"></div><div class="a" style="left:50px;top:5px;width:5px;height:5px;background:#5a5a5a"></div><div class="a" style="left:60px;top:5px;width:5px;height:5px;background:#5a5a5a"></div><div class="a" style="left:70px;top:5px;width:5px;height:5px;background:#5a5a5a"></div><div class="a" style="left:80px;top:5px;width:5px;height:5px;background:#5a5a5a"></div><div class="a" style="left:85px;top:5px;width:5px;height:5px;background:#bdbdbd"></div><div class="a" style="left:20px;top:10px;width:5px;height:5px;background:#bdbdbd"></div><div class="a" style="left:25px;top:10px;width:5px;height:5px;background:#bdbdbd"></div><div class="a" style="left:30px;top:10px;width:5px;height:5px;background:#bdbdbd"></div><div class="a" style="left:35px;top:10px;width:5px;height:5px;background:#bdbdbd"></div><div class="a" style="left:45px;top:10px;width:5px;height:5px;background:#bdbdbd"></div><div class="a" style="left:55px;top:10px;width:5px;height:5px;background:#bdbdbd"></div><div class="a" style="left:70px;top:10px;width:5px;height:5px;background:#bdbdbd"></div><div class="a" style="left:75px;top:10px;width:5px;height:5px;background:#bdbdbd"></div><div class="a" style="left:85px;top:10px;width:5px;height:5px;background:#5a5a5a"></div><div class="a" style="left:5px;top:15px;width:5px;height:5px;background:#bdbdbd"></div><div class="a" style="left:10px;top:15px;width:5px;height:5px;background:#bdbdbd"></div><div class="a" style="left:25px;top:15px;width:5px;height:5px;background:#bdbdbd"></div><div class="a" style="left:30px;top:15px;width:5px;height:5px;background:#bdbdbd"></div><div class="a" style="left:35px;top:15px;width:5px;height:5px;background:#bdbdbd"></div><div class="a" style="left:50px;top:15px;width:5px;height:5px;background:#bdbdbd"></div><div class="a" style="left:55px;top:15px;width:5px;height:5px;background:#bdbdbd"></div><div class="a" style="left:60px;top:15px;width:5px;height:5px;background:#bdbdbd"></div><div class="a" style="left:65px;top:15px;width:5px;height:5px;background:#bdbdbd"></div><div class="a" style="left:75px;top:15px;width:5px;height:5px;background:#bdbdbd"></div><div class="a" style="left:80px;top:15px;width:5px;height:5px;background:#5a5a5a"></div><div class="a" style="left:85px;top:15px;width:5px;height:5px;background:#5a5a5a"></div><div class="a" style="left:0px;top:20px;width:5px;height:5px;background:#bdbdbd"></div><div class="a" style="left:10px;top:20px;width:5px;height:5px;background:#bdbdbd"></div><div class="a" style="left:20px;top:20px;width:5px;height:5px;background:#bdbdbd"></div><div class="a" style="left:25px;top:20px;width:5px;height:5px;background:#5a5a5a"></div><div class="a" style="left:30px;top:20px;width:5px;height:5px;background:#bdbdbd"></div><div class="a" style="left:35px;top:20px;width:5px;height:5px;background:#bdbdbd"></div><div class="a" style="left:50px;top:20px;width:5px;height:5px;background:#bdbdbd"></div><div class="a" style="left:60px;top:20px;width:5px;height:5px;background:#bdbdbd"></div><div class="a" style="left:65px;top:20px;width:5px;height:5px;background:#bdbdbd"></div><div class="a" style="left:80px;top:20px;width:5px;height:5px;background:#bdbdbd"></div><div class="a" style="left:0px;top:25px;width:5px;height:5px;background:#bdbdbd"></div><div class="a" style="left:5px;top:25px;width:5px;height:5px;background:#bdbdbd"></div><div class="a" style="left:15px;top:25px;width:5px;height:5px;background:#bdbdbd"></div><div class="a" style="left:20px;top:25px;width:5px;height:5px;background:#bdbdbd"></div><div class="a" style="left:25px;top:25px;width:5px;height:5px;background:#bdbdbd"></div><div class="a" style="left:30px;top:25px;width:5px;height:5px;background:#bdbdbd"></div><div class="a" style="left:35px;top:25px;width:5px;height:5px;background:#5a5a5a"></div><div class="a" style="left:40px;top:25px;width:5px;height:5px;background:#bdbdbd"></div><div class="a" style="left:50px;top:25px;width:5px;height:5px;background:#bdbdbd"></div><div class="a" style="left:55px;top:25px;width:5px;height:5px;background:#5a5a5a"></div><div class="a" style="left:65px;top:25px;width:5px;height:5px;background:#5a5a5a"></div><div class="a" style="left:70px;top:25px;width:5px;height:5px;background:#5a5a5a"></div><div class="a" style="left:80px;top:25px;width:5px;height:5px;background:#bdbdbd"></div><div class="a" style="left:85px;top:25px;width:5px;height:5px;background:#bdbdbd"></div><div class="a" style="left:10px;top:30px;width:5px;height:5px;background:#bdbdbd"></div><div class="a" style="left:15px;top:30px;width:5px;height:5px;background:#bdbdbd"></div><div class="a" style="left:30px;top:30px;width:5px;height:5px;background:#bdbdbd"></div><div class="a" style="left:50px;top:30px;width:5px;height:5px;background:#5a5a5a"></div><div class="a" style="left:55px;top:30px;width:5px;height:5px;background:#bdbdbd"></div><div class="a" style="left:60px;top:30px;width:5px;height:5px;background:#bdbdbd"></div><div class="a" style="left:70px;top:30px;width:5px;height:5px;background:#bdbdbd"></div><div class="a" style="left:80px;top:30px;width:5px;height:5px;background:#bdbdbd"></div><div class="a" style="left:0px;top:35px;width:5px;height:5px;background:#5a5a5a"></div><div class="a" style="left:5px;top:35px;width:5px;height:5px;background:#bdbdbd"></div><div class="a" style="left:10px;top:35px;width:5px;height:5px;background:#bdbdbd"></div><div class="a" style="left:20px;top:35px;width:5px;height:5px;background:#bdbdbd"></div><div class="a" style="left:25px;top:35px;width:5px;height:5px;background:#bdbdbd"></div><div class="a" style="left:30px;top:35px;width:5px;height:5px;background:#5a5a5a"></div><div class="a" style="left:45px;top:35px;width:5px;height:5px;background:#bdbdbd"></div><div class="a" style="left:55px;top:35px;width:5px;height:5px;background:#bdbdbd"></div><div class="a" style="left:60px;top:35px;width:5px;height:5px;background:#bdbdbd"></div><div class="a" style="left:65px;top:35px;width:5px;height:5px;background:#bdbdbd"></div><div class="a" style="left:70px;top:35px;width:5px;height:5px;background:#5a5a5a"></div><div class="a" style="left:75px;top:35px;width:5px;height:5px;background:#bdbdbd"></div><div class="a" style="left:80px;top:35px;width:5px;height:5px;background:#bdbdbd"></div><div class="a" style="left:85px;top:35px;width:5px;height:5px;background:#bdbdbd"></div><div class="a" style="left:0px;top:40px;width:5px;height:5px;background:#5a5a5a"></div><div class="a" style="left:5px;top:40px;width:5px;height:5px;background:#bdbdbd"></div><div class="a" style="left:10px;top:40px;width:5px;height:5px;background:#bdbdbd"></div><div class="a" style="left:35px;top:40px;width:5px;height:5px;background:#5a5a5a"></div><div class="a" style="left:40px;top:40px;width:5px;height:5px;background:#bdbdbd"></div><div class="a" style="left:45px;top:40px;width:5px;height:5px;background:#bdbdbd"></div><div class="a" style="left:50px;top:40px;width:5px;height:5px;background:#bdbdbd"></div><div class="a" style="left:70px;top:40px;width:5px;height:5px;background:#bdbdbd"></div><div class="a" style="left:80px;top:40px;width:5px;height:5px;background:#5a5a5a"></div><div class="a" style="left:0px;top:45px;width:5px;height:5px;background:#bdbdbd"></div><div class="a" style="left:10px;top:45px;width:5px;height:5px;background:#bdbdbd"></div><div class="a" style="left:15px;top:45px;width:5px;height:5px;background:#5a5a5a"></div><div class="a" style="left:50px;top:45px;width:5px;height:5px;background:#bdbdbd"></div><div class="a" style="left:70px;top:45px;width:5px;height:5px;background:#bdbdbd"></div><div class="a" style="left:85px;top:45px;width:5px;height:5px;background:#5a5a5a"></div><div class="a" style="left:5px;top:50px;width:5px;height:5px;background:#bdbdbd"></div><div class="a" style="left:10px;top:50px;width:5px;height:5px;background:#5a5a5a"></div><div class="a" style="left:20px;top:50px;width:5px;height:5px;background:#bdbdbd"></div><div class="a" style="left:45px;top:50px;width:5px;height:5px;background:#bdbdbd"></div><div class="a" style="left:55px;top:50px;width:5px;height:5px;background:#5a5a5a"></div><div class="a" style="left:60px;top:50px;width:5px;height:5px;background:#5a5a5a"></div><div class="a" style="left:70px;top:50px;width:5px;height:5px;background:#bdbdbd"></div><div class="a" style="left:80px;top:50px;width:5px;height:5px;background:#bdbdbd"></div><div class="a" style="left:0px;top:55px;width:5px;height:5px;background:#5a5a5a"></div><div class="a" style="left:5px;top:55px;width:5px;height:5px;background:#bdbdbd"></div><div class="a" style="left:15px;top:55px;width:5px;height:5px;background:#5a5a5a"></div><div class="a" style="left:30px;top:55px;width:5px;height:5px;background:#bdbdbd"></div><div class="a" style="left:35px;top:55px;width:5px;height:5px;background:#bdbdbd"></div><div class="a" style="left:40px;top:55px;width:5px;height:5px;background:#bdbdbd"></div><div class="a" style="left:50px;top:55px;width:5px;height:5px;background:#bdbdbd"></div><div class="a" style="left:55px;top:55px;width:5px;height:5px;background:#bdbdbd"></div><div class="a" style="left:70px;top:55px;width:5px;height:5px;background:#5a5a5a"></div><div class="a" style="left:80px;top:55px;width:5px;height:5px;background:#bdbdbd"></div><div class="a" style="left:0px;top:60px;width:5px;height:5px;background:#bdbdbd"></div><div class="a" style="left:5px;top:60px;width:5px;height:5px;background:#5a5a5a"></div><div class="a" style="left:25px;top:60px;width:5px;height:5px;background:#bdbdbd"></div><div class="a" style="left:30px;top:60px;width:5px;height:5px;background:#5a5a5a"></div><div class="a" style="left:35px;top:60px;width:5px;height:5px;background:#bdbdbd"></div><div class="a" style="left:40px;top:60px;width:5px;height:5px;background:#bdbdbd"></div><div class="a" style="left:45px;top:60px;width:5px;height:5px;background:#5a5a5a"></div><div class="a" style="left:70px;top:60px;width:5px;height:5px;background:#bdbdbd"></div><div class="a" style="left:75px;top:60px;width:5px;height:5px;background:#bdbdbd"></div><div class="a" style="left:80px;top:60px;width:5px;height:5px;background:#5a5a5a"></div><div class="a" style="left:85px;top:60px;width:5px;height:5px;background:#bdbdbd"></div><div class="a" style="left:0px;top:65px;width:5px;height:5px;background:#bdbdbd"></div><div class="a" style="left:5px;top:65px;width:5px;height:5px;background:#bdbdbd"></div><div class="a" style="left:15px;top:65px;width:5px;height:5px;background:#5a5a5a"></div><div class="a" style="left:20px;top:65px;width:5px;height:5px;background:#bdbdbd"></div><div class="a" style="left:35px;top:65px;width:5px;height:5px;background:#5a5a5a"></div><div class="a" style="left:40px;top:65px;width:5px;height:5px;background:#bdbdbd"></div><div class="a" style="left:45px;top:65px;width:5px;height:5px;background:#bdbdbd"></div><div class="a" style="left:55px;top:65px;width:5px;height:5px;background:#bdbdbd"></div><div class="a" style="left:65px;top:65px;width:5px;height:5px;background:#5a5a5a"></div><div class="a" style="left:70px;top:65px;width:5px;height:5px;background:#bdbdbd"></div><div class="a" style="left:80px;top:65px;width:5px;height:5px;background:#bdbdbd"></div><div class="a" style="left:85px;top:65px;width:5px;height:5px;background:#bdbdbd"></div><div class="a" style="left:0px;top:70px;width:5px;height:5px;background:#5a5a5a"></div><div class="a" style="left:5px;top:70px;width:5px;height:5px;background:#bdbdbd"></div><div class="a" style="left:15px;top:70px;width:5px;height:5px;background:#bdbdbd"></div><div class="a" style="left:20px;top:70px;width:5px;height:5px;background:#bdbdbd"></div><div class="a" style="left:25px;top:70px;width:5px;height:5px;background:#bdbdbd"></div><div class="a" style="left:35px;top:70px;width:5px;height:5px;background:#5a5a5a"></div><div class="a" style="left:65px;top:70px;width:5px;height:5px;background:#bdbdbd"></div><div class="a" style="left:70px;top:70px;width:5px;height:5px;background:#5a5a5a"></div><div class="a" style="left:75px;top:70px;width:5px;height:5px;background:#bdbdbd"></div><div class="a" style="left:80px;top:70px;width:5px;height:5px;background:#bdbdbd"></div><div class="a" style="left:85px;top:70px;width:5px;height:5px;background:#5a5a5a"></div><div class="a" style="left:5px;top:75px;width:5px;height:5px;background:#bdbdbd"></div><div class="a" style="left:10px;top:75px;width:5px;height:5px;background:#bdbdbd"></div><div class="a" style="left:15px;top:75px;width:5px;height:5px;background:#bdbdbd"></div><div class="a" style="left:25px;top:75px;width:5px;height:5px;background:#5a5a5a"></div><div class="a" style="left:40px;top:75px;width:5px;height:5px;background:#bdbdbd"></div><div class="a" style="left:55px;top:75px;width:5px;height:5px;background:#bdbdbd"></div><div class="a" style="left:70px;top:75px;width:5px;height:5px;background:#bdbdbd"></div><div class="a" style="left:75px;top:75px;width:5px;height:5px;background:#5a5a5a"></div><div class="a" style="left:0px;top:80px;width:5px;height:5px;background:#bdbdbd"></div><div class="a" style="left:5px;top:80px;width:5px;height:5px;background:#5a5a5a"></div><div class="a" style="left:25px;top:80px;width:5px;height:5px;background:#5a5a5a"></div><div class="a" style="left:35px;top:80px;width:5px;height:5px;background:#bdbdbd"></div><div class="a" style="left:60px;top:80px;width:5px;height:5px;background:#bdbdbd"></div><div class="a" style="left:80px;top:80px;width:5px;height:5px;background:#5a5a5a"></div><div class="a" style="left:0px;top:85px;width:5px;height:5px;background:#bdbdbd"></div><div class="a" style="left:15px;top:85px;width:5px;height:5px;background:#bdbdbd"></div><div class="a" style="left:20px;top:85px;width:5px;height:5px;background:#bdbdbd"></div><div class="a" style="left:25px;top:85px;width:5px;height:5px;background:#5a5a5a"></div><div class="a" style="left:30px;top:85px;width:5px;height:5px;background:#5a5a5a"></div><div class="a" style="left:40px;top:85px;width:5px;height:5px;background:#5a5a5a"></div><div class="a" style="left:45px;top:85px;width:5px;height:5px;background:#bdbdbd"></div><div class="a" style="left:55px;top:85px;width:5px;height:5px;background:#bdbdbd"></div><div class="a" style="left:65px;top:85px;width:5px;height:5px;background:#bdbdbd"></div><div class="a" style="left:70px;top:85px;width:5px;height:5px;background:#bdbdbd"></div><div class="a" style="left:80px;top:85px;width:5px;height:5px;background:#bdbdbd"></div><div class="a" style="left:85px;top:85px;width:5px;height:5px;background:#bdbdbd"></div><div class="a" style="left:0px;top:0px;width:27px;height:27px;border:5px solid #555;background:#999"><div class="a" style="left:5px;top:5px;width:7px;height:7px;background:#555"></div></div><div class="a" style="left:64px;top:0px;width:27px;height:27px;border:5px solid #555;background:#999"><div class="a" style="left:5px;top:5px;width:7px;height:7px;background:#555"></div></div><div class="a" style="left:0px;top:64px;width:27px;height:27px;border:5px solid #555;background:#999"><div class="a" style="left:5px;top:5px;width:7px;height:7px;background:#555"></div></div></div></div>
<div class="a" style="left:951.0px;top:107.0px;width:108px;height:36px;background:#fbfbfb"></div>
<div class="a" style="left:958.0px;top:111.0px;width:96px;height:8px;background:#bdbdbd;filter:blur(2.5px)"></div>
<div class="a" style="left:958.0px;top:128.0px;width:22px;height:12px;background:#c4c4c4;filter:blur(2.5px)"></div>
<div class="a" style="left:995.0px;top:128.0px;width:62px;height:12px;background:#c4c4c4;filter:blur(2.5px)"></div>
<div class="a" style="left:936.0px;top:109.0px;font-size:13px;color:#444;line-height:16px">扫</div>
<div class="a" style="left:910.0px;top:125.0px;font-size:18px;color:#333;line-height:20px;width:41px;overflow:hidden">病人I</div>
<div class="a" style="left:44.0px;top:125.0px;font-size:18px;color:#333;line-height:20px">检查号：</div>
<div class="a" style="left:123.0px;top:125.0px;font-size:18px;color:#333;line-height:20px">T</div>
<div class="a" style="left:184.0px;top:125.0px;font-size:18px;color:#222;line-height:20px">01</div>
<div class="a" style="left:24.0px;top:152.0px;width:1055px;height:1.6px;background:#5a5a5a"></div>
<div class="a" style="left:44.0px;top:158.5px;width:82px;display:flex;justify-content:space-between;font-size:17px;color:#333;line-height:20px"><span>姓</span><span>名</span></div>
<div class="a" style="left:44.0px;top:185.0px;width:82px;display:flex;justify-content:space-between;font-size:17px;color:#333;line-height:20px"><span>申</span><span>请</span><span>科</span><span>室</span></div>
<div class="a" style="left:44.0px;top:211.5px;width:82px;display:flex;justify-content:space-between;font-size:17px;color:#333;line-height:20px"><span>检</span><span>查</span><span>设</span><span>备</span></div>
<div class="a" style="left:44.0px;top:238.0px;width:103px;display:flex;justify-content:space-between;font-size:17px;color:#333;line-height:20px"><span>检</span><span>查</span><span>项</span><span>目：</span></div>
<div class="a" style="left:149.0px;top:238.0px;font-size:17.2px;color:#333;line-height:20px;letter-spacing:0.25px">[乳腺及其引流区淋巴结彩超（乳腺中心）,超声检查]</div>
<div class="a" style="left:184.0px;top:158.5px;font-size:17px;color:#333;line-height:20px">花</div>
<div class="a" style="left:125.0px;top:123.0px;width:59px;height:106px;background:rgba(250,250,250,0.96)"></div>
<div class="a" style="left:148.0px;top:161.0px;width:40px;height:14px;background:#9a9a9a;filter:blur(3px)"></div>
<div class="a" style="left:148.0px;top:188.0px;width:38px;height:13px;background:#a0a0a0;filter:blur(3px)"></div>
<div class="a" style="left:150.0px;top:215.0px;width:22px;height:12px;background:#a8a8a8;filter:blur(3px)"></div>
<div class="a" style="left:126.0px;top:128.0px;width:58px;height:14px;background:#9a9a9a;filter:blur(3px)"></div>
<div class="a" style="left:379.0px;top:158.5px;width:102px;display:flex;justify-content:space-between;font-size:17px;color:#333;line-height:20px"><span>性</span><span>别：</span></div>
<div class="a" style="left:379.0px;top:185.0px;width:102px;display:flex;justify-content:space-between;font-size:17px;color:#333;line-height:20px"><span>申</span><span>请</span><span>医</span><span>生：</span></div>
<div class="a" style="left:379.0px;top:211.5px;width:102px;display:flex;justify-content:space-between;font-size:17px;color:#333;line-height:20px"><span>门</span><span>诊</span><span>号：</span></div>
<div class="a" style="left:484.0px;top:158.5px;font-size:17px;color:#333;line-height:20px">女</div>
<div class="a" style="left:485.0px;top:188.0px;width:50px;height:14px;background:#a8a8a8;filter:blur(3px)"></div>
<div class="a" style="left:714.0px;top:158.5px;width:102px;display:flex;justify-content:space-between;font-size:17px;color:#333;line-height:20px"><span>年</span><span>龄：</span></div>
<div class="a" style="left:714.0px;top:185.0px;width:102px;display:flex;justify-content:space-between;font-size:17px;color:#333;line-height:20px"><span>患</span><span>者</span><span>类</span><span>型：</span></div>
<div class="a" style="left:819.0px;top:158.5px;font-size:17px;color:#333;line-height:20px">45岁</div>
<div class="a" style="left:819.0px;top:185.0px;font-size:17px;color:#333;line-height:20px">门诊</div>
<div class="a" style="left:24.0px;top:261.0px;width:1055px;height:1.6px;background:#5a5a5a"></div>
<div class="a" style="left:44.0px;top:273.5px;font-size:19.3px;font-weight:bold;color:#222;line-height:22px">影像描述：</div>
<div class="a" style="left:93.0px;top:310.0px;font-size:20px;letter-spacing:-0.2px;color:#333;line-height:22px;letter-spacing:-0.3px">双侧乳腺形态大小正常，内结构清晰，导管未见明显增宽。于左侧乳腺（1A）可见大小约5.6mm×3.4mm的囊实</div>
<div class="a" style="left:93.0px;top:340.3px;font-size:20px;letter-spacing:-0.2px;color:#333;line-height:22px">性结节，轮廓规整，边界清，内未见明显血流信号。</div>
<div class="a" style="left:93.0px;top:370.6px;font-size:20px;letter-spacing:-0.2px;color:#333;line-height:22px">双侧腋下未探及明显肿大淋巴结。</div>
<div class="a" style="left:44.0px;top:475.0px;font-size:19.3px;font-weight:bold;color:#222;line-height:22px">影像诊断：</div>
<div class="a" style="left:93.0px;top:511.5px;font-size:20px;letter-spacing:-0.2px;color:#333;line-height:22px">左侧乳腺囊实性结节 BI-RADS:2级</div>
<div class="a" style="left:93.0px;top:541.5px;font-size:20px;letter-spacing:-0.2px;color:#333;line-height:22px">考虑乳腺增生所致可能</div>
<div class="a" style="left:44.0px;top:671.0px;font-size:18px;color:#333;line-height:20px">报告医生：</div>
<div class="a" style="left:140.0px;top:675.0px;width:56px;height:13px;background:#8e8e8e;filter:blur(3px)"></div>
<div class="a" style="left:419.0px;top:671.0px;font-size:18px;color:#333;line-height:20px">审核医生：</div>
<div class="a" style="left:518.0px;top:675.0px;width:52px;height:13px;background:#8e8e8e;filter:blur(3px)"></div>
<div class="a" style="left:793.0px;top:671.0px;font-size:18px;color:#333;line-height:20px">报告日期：</div>
<div class="a" style="left:890.0px;top:671.0px;font-size:18.3px;color:#222;line-height:20px">2025-01-06 09:02:11</div>
<div class="a" style="left:24.0px;top:696.0px;width:1055px;height:1.6px;background:#5a5a5a"></div>
<div class="a" style="left:44.0px;top:703.5px;font-size:18px;color:#333;line-height:20px">备注：</div>
<div class="a" style="left:100.0px;top:703.5px;font-size:18px;color:#333;line-height:20px">本报告仅供本院临床科室参考</div>
<div class="a" style="left:791.0px;top:703.5px;font-size:18px;color:#333;line-height:20px">检查时间：</div>
<div class="a" style="left:890.0px;top:703.5px;font-size:18.3px;color:#222;line-height:20px">2025-01-06 09:02:10</div></div>
<div class="a" style="left:1240px;top:601px;width:32px;height:39px;border-radius:20px 0 0 20px;background:linear-gradient(90deg,#7199f6,#5b8cf6)"></div>
<svg class="a" style="left:1253px;top:613px" width="10" height="16" viewBox="0 0 10 16"><path d="M8 1.5 L2.5 8 L8 14.5" fill="none" stroke="#fff" stroke-width="2.2"/></svg>
</div><!--/RP-->

<!-- FOOTER -->
<!--FT--><div id="ftr">
  <svg class="a" style="left:25px;top:21px" width="16" height="17" viewBox="0 0 16 17"><circle cx="8" cy="5" r="3.2" fill="none" stroke="#888" stroke-width="1.3"/><path d="M1.5 9.5 H14.5" stroke="#888" stroke-width="1.3"/><path d="M3 9.5 C2 11 2.5 14.5 5 15.2 H11 C13.5 14.5 14 11 13 9.5" fill="none" stroke="#888" stroke-width="1.3"/></svg>
  <div class="a" style="left:40px;top:22px;font-size:17.6px;color:#777;line-height:20px">对比操作指引</div>
  <div class="a" style="left:504px;top:11px;width:97px;height:38px;border-radius:4px;background:#f5b46e"></div>
  <div class="a" style="left:523px;top:21px;font-size:14.5px;color:#fff;line-height:17px">对比影像</div>
  <div class="a" style="left:1773px;top:11px;width:99px;height:38px;border-radius:5px;background:#4dc0b8"></div>
  <div class="a" style="left:1793px;top:21px;font-size:15px;color:#eefaf9;line-height:18px">Web图像</div>
</div><!--/FT-->

</body></html>
